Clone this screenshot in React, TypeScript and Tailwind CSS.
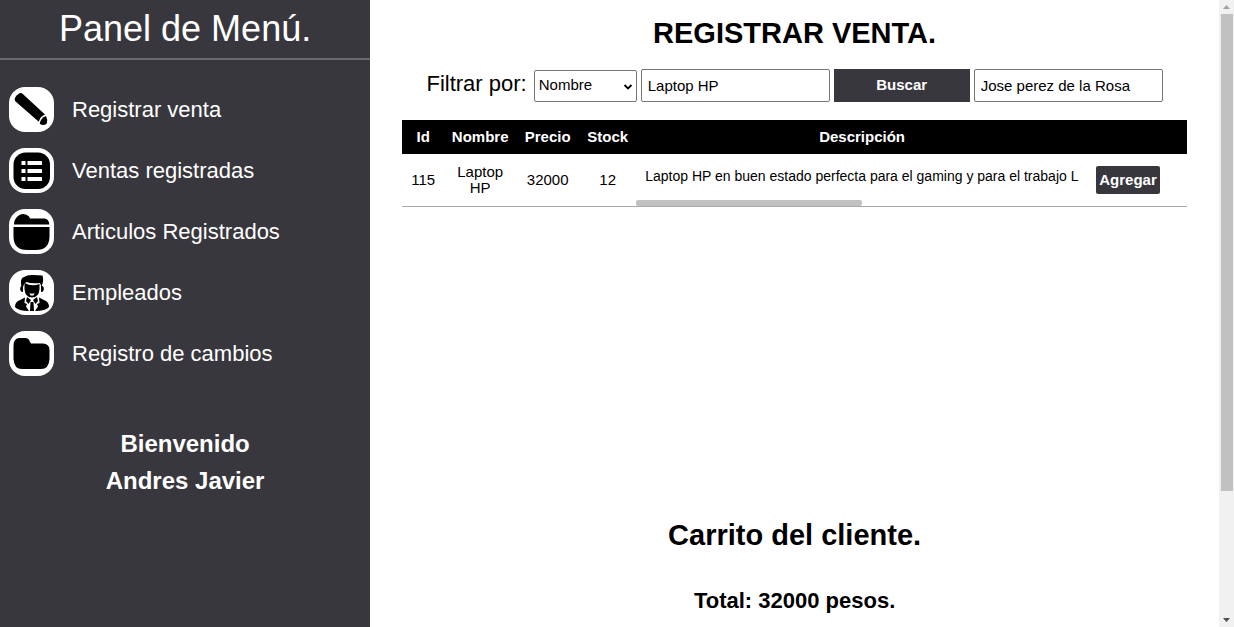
import type { ReactNode } from 'react';

function PencilIcon() {
  return (
    <svg viewBox="0 0 45 45" className="size-full" aria-hidden="true">
      <path d="M7.5 8.5 10.5 6.3Q12.3 5.5 13.8 7L36 27.5Q31 29.5 29.8 34.8L6.3 14.2Q5 12.5 6.2 10.5Z" fill="#000" />
      <path d="M37 29Q39 33 37.8 36.5 34.5 39.5 30.7 36.8 31.5 31 37 29Z" fill="#000" />
    </svg>
  );
}

function ListIcon() {
  return (
    <svg viewBox="0 0 45 45" className="size-full" aria-hidden="true">
      <rect x="4.5" y="4.5" width="36.5" height="36.5" rx="12" fill="#000" />
      <path
        d="M12.5 13h4v4h-4zM18.5 13H33v4H18.5zM12.5 21h4v4h-4zM18.5 21H33v4H18.5zM12.5 29h4v4h-4zM18.5 29H33v4H18.5z"
        fill="#fff"
      />
    </svg>
  );
}

function BoxFolderIcon() {
  return (
    <svg viewBox="0 0 45 45" className="size-full" aria-hidden="true">
      <path d="M5 15.5Q5 10 9 7Q11 5 14 5Q18 5 20 7.5L21 9.5H36Q40 10.5 40.3 15.5Z" fill="#000" />
      <path d="M4.5 18H40.5V28Q40 41 27 41H18Q5 41 4.5 28Z" fill="#000" />
    </svg>
  );
}

function PersonIcon() {
  return (
    <svg viewBox="0 0 45 45" className="size-full" aria-hidden="true">
      <path
        d="M12.5 17Q10.5 8 15 7Q19 4.5 24 5L33.5 5.5Q34.5 9 34 12L32.5 17 31 13Q22 14 17.5 12Q14.5 13.5 14 17Z"
        fill="#000"
      />
      <path d="M15.5 13Q23 17 30.5 14V19Q30 27.5 23 27.5Q16 27.5 15.5 19Z" fill="#000" />
      <path d="M20.5 23Q23 24.5 25.5 23L24.5 25.5H21.5Z" fill="#fff" />
      <path d="M12.5 16Q10 17.5 12 21.5L14 22V16ZM33.5 16Q36 17.5 34 21.5L32 22V16Z" fill="#000" />
      <path d="M6 37Q6 32 10 30.5L16 27.5 15.5 33 18 34 17 36.5 20 41Q9 41 6 37Z" fill="#000" />
      <path d="M40 37Q40 32 36 30.5L30 27.5 30.5 33 28 34 29 36.5 26 41Q37 41 40 37Z" fill="#000" />
      <path d="M18 27 22 30 19.5 34 17 31ZM28 27 24 30 26.5 34 29 31ZM21.5 32H24.5L25 41H21Z" fill="#000" />
    </svg>
  );
}

function FolderIcon() {
  return (
    <svg viewBox="0 0 45 45" className="size-full" aria-hidden="true">
      <path
        d="M4.5 15Q4.5 7.5 10 7H17Q20 7.5 21 11L22 12.5H34Q40.5 13 40.5 19V28Q40 38 32 38H13Q5 38 4.5 28Z"
        fill="#000"
      />
    </svg>
  );
}

const menu: { label: string; icon: ReactNode }[] = [
  { label: 'Registrar venta', icon: <PencilIcon /> },
  { label: 'Ventas registradas', icon: <ListIcon /> },
  { label: 'Articulos Registrados', icon: <BoxFolderIcon /> },
  { label: 'Empleados', icon: <PersonIcon /> },
  { label: 'Registro de cambios', icon: <FolderIcon /> },
];

function Sidebar() {
  return (
    <aside className="w-3/10 shrink-0 bg-[#38373d] text-white">
      <h2 className="border-b-2 border-[#6b696e] pt-1 pb-1 text-center text-4xl leading-[50px]">Panel de Menú.</h2>
      <nav className="mt-[27px] flex flex-col gap-4 pl-[9px]">
        {menu.map((item) => (
          <a key={item.label} href="#" className="flex items-center gap-[18px] text-[22px] leading-7">
            <span className="size-[45px] shrink-0 overflow-hidden rounded-2xl bg-white">{item.icon}</span>
            {item.label}
          </a>
        ))}
      </nav>
      <p className="mt-[49px] text-center text-2xl leading-[37px] font-bold">
        Bienvenido
        <br />
        Andres Javier
      </p>
    </aside>
  );
}

function Filters() {
  return (
    <form className="mt-4 flex items-center justify-center gap-1" onSubmit={(e) => e.preventDefault()}>
      <label htmlFor="filter" className="mr-[3px] pb-1 text-[22px] leading-7">
        Filtrar por:
      </label>
      <div className="relative w-[103px]">
        <select
          id="filter"
          className="h-8 w-full appearance-none rounded-xs border border-[#767676] bg-white pl-1 text-[15px]"
        >
          <option>Nombre</option>
        </select>
        <svg viewBox="0 0 10 6" className="pointer-events-none absolute top-[14px] right-1 h-[6px] w-[10px]" aria-hidden="true">
          <path d="M1.5 1 5 4.5 8.5 1" fill="none" stroke="#000" strokeWidth="1.8" />
        </svg>
      </div>
      <input
        aria-label="Artículo"
        defaultValue="Laptop HP"
        className="h-[33px] w-[189px] rounded-xs border border-[#767676] px-[6px] text-[15px]"
      />
      <button type="submit" className="h-[33px] w-[136px] bg-[#38373d] text-[15px] font-bold text-white">
        Buscar
      </button>
      <input
        aria-label="Cliente"
        defaultValue="Jose perez de la Rosa"
        className="h-[33px] w-[189px] rounded-xs border border-[#767676] px-[6px] text-[15px]"
      />
    </form>
  );
}

function ProductTable() {
  return (
    <div className="mx-8 mt-[18px] h-[383px]">
      <table className="w-full table-fixed border-collapse text-center text-[15px] leading-4">
        <colgroup>
          <col className="w-[42px]" />
          <col className="w-[72px]" />
          <col className="w-[63px]" />
          <col className="w-[57px]" />
          <col />
          <col className="w-[99px]" />
        </colgroup>
        <thead>
          <tr className="h-[34px] bg-black text-white">
            <th>Id</th>
            <th>Nombre</th>
            <th>Precio</th>
            <th>Stock</th>
            <th>Descripción</th>
            <th></th>
          </tr>
        </thead>
        <tbody>
          <tr className="h-[52px] border-b border-[#a9a9a9]">
            <td>115</td>
            <td className="px-3">Laptop HP</td>
            <td>32000</td>
            <td>12</td>
            <td className="align-bottom">
              <div className="overflow-hidden pb-[14px] pl-[9px] text-left text-sm leading-5 whitespace-nowrap">
                Laptop HP en buen estado perfecta para el gaming y para el trabajo L
              </div>
              <div className="h-[6px] w-1/2 rounded-xs bg-[#c1c1c1]"></div>
            </td>
            <td className="pl-2 text-left">
              <button type="button" className="h-7 w-16 rounded-xs bg-[#38373d] font-bold text-white">
                Agregar
              </button>
            </td>
          </tr>
        </tbody>
      </table>
    </div>
  );
}

function PageScrollbar() {
  return (
    <div className="flex w-[15px] shrink-0 flex-col items-center bg-[#f1f1f1]" aria-hidden="true">
      <svg viewBox="0 0 15 14" className="h-[14px] w-[15px]">
        <path d="M4 9 7.5 5 11 9Z" fill="#a3a3a3" />
      </svg>
      <div className="w-3 grow-[477] bg-[#c1c1c1]"></div>
      <div className="grow-[122]"></div>
      <svg viewBox="0 0 15 14" className="h-[14px] w-[15px]">
        <path d="M4 5 7.5 9 11 5Z" fill="#505050" />
      </svg>
    </div>
  );
}

export default function App() {
  return (
    <div className="flex h-screen overflow-hidden bg-white font-['Liberation_Sans',Arial,sans-serif] text-black">
      <Sidebar />
      <main className="min-w-0 grow">
        <h1 className="pt-[13px] text-center text-[29px] leading-10 font-bold">REGISTRAR VENTA.</h1>
        <Filters />
        <ProductTable />
        <h2 className="mt-3 text-center text-[29px] leading-10 font-bold">Carrito del cliente.</h2>
        <p className="mt-8 text-center text-[22px] leading-7 font-bold">Total: 32000 pesos.</p>
      </main>
      <PageScrollbar />
    </div>
  );
}
